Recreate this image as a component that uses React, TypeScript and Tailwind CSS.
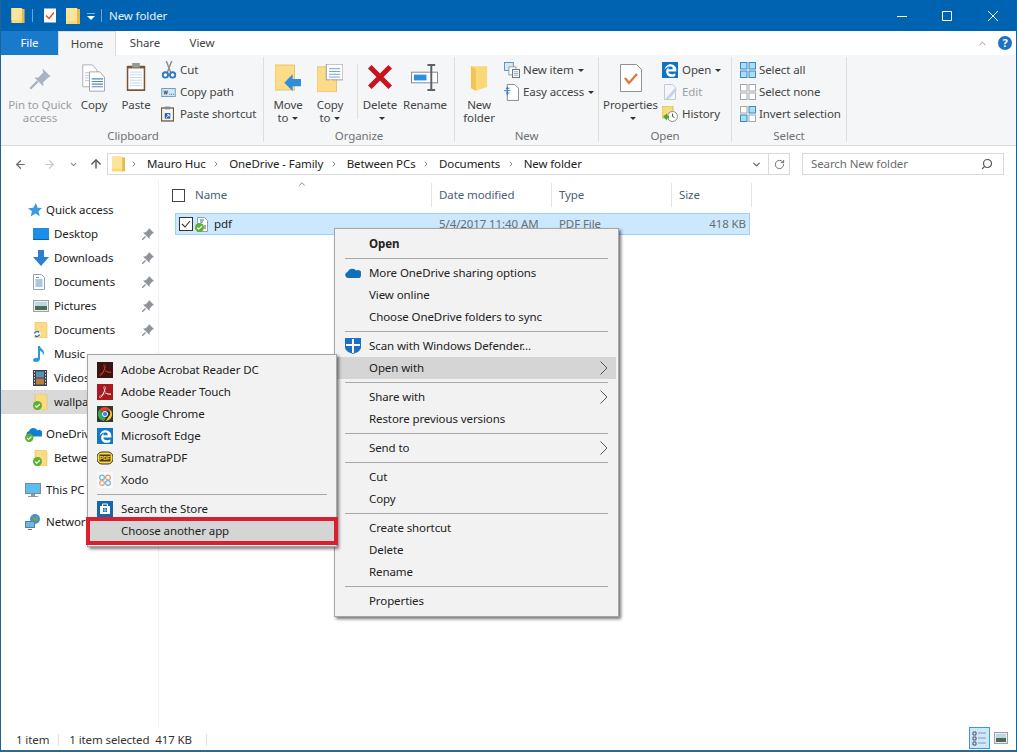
import { ReactNode } from 'react';
import { FaEdgeLegacy } from 'react-icons/fa6';
import { SiAdobeacrobatreader } from 'react-icons/si';
import { ArrowLeft, ArrowRight, ArrowUp, ChevronDown, ChevronRight, ChevronUp, RotateCw, Search } from 'lucide-react';

const Folder = ({ className = '' }: { className?: string }) => (
  <svg viewBox="0 0 14 16" className={className}>
    <path d="M0 0h10l2 1v15H0z" fill="#fbd878" />
    <path d="M11 1h3v15h-3z" fill="#e8b84e" />
    <path d="M0 0h11v13H0z" fill="#fde49c" />
  </svg>
);

const Check = ({ x = 0, y = 0 }: { x?: number; y?: number }) => (
  <g transform={`translate(${x} ${y})`}>
    <circle cx="4.5" cy="4.5" r="4.5" fill="#5cb130" />
    <path d="M2.2 4.6l1.6 1.6 3-3" stroke="#fff" strokeWidth="1.3" fill="none" />
  </g>
);

const SyncFolder = ({ badge }: { badge: 'check' | 'sync' }) => (
  <svg viewBox="0 0 16 16" className="w-4 h-4">
    <path d="M2 0h11l1 2v14H2z" fill="#fbdc84" stroke="#e3bd62" strokeWidth="0.6" />
    {badge === 'check' ? (
      <Check x={0} y={7} />
    ) : (
      <g>
        <circle cx="4" cy="12" r="3.6" fill="#fff" />
        <path d="M1.5 11.5a2.6 2.6 0 0 1 4.6-1M6.5 12.5a2.6 2.6 0 0 1-4.6 1" stroke="#2a62b4" strokeWidth="1.3" fill="none" />
      </g>
    )}
  </svg>
);

const Pin = ({ className = 'w-3 h-3' }: { className?: string }) => (
  <svg viewBox="0 0 12 12" className={className}>
    <path d="M7 0l5 5-1.5.6-2.7 2.7L7.5 11 1 4.5l2.7-.3 2.7-2.7z" fill="#8f949b" />
    <path d="M3.5 8.5L0 12" stroke="#8f949b" strokeWidth="1.4" />
  </svg>
);

const Drop = () => <span className="inline-block align-middle ml-[4px] w-0 h-0 border-x-[3px] border-x-transparent border-t-[3px] border-t-[#333]" />;

// ---- ribbon icons ----
const PinLarge = () => (
  <svg viewBox="0 0 32 32" className="w-[26px] h-[26px]">
    <path d="M19 3l10 10-3 1-6 6 0 5L9 14l5 0 6-6z" fill="#a9b2c2" />
    <path d="M13 19L4 28" stroke="#a9b2c2" strokeWidth="3" />
  </svg>
);
const CopyLarge = () => (
  <svg viewBox="0 0 32 32" preserveAspectRatio="none" className="w-[24px] h-7">
    <path d="M1 1h13l6 6v19H1z" fill="#fff" stroke="#9aa3ad" />
    <path d="M4 10h12M4 13h12M4 16h12M4 19h12" stroke="#a6bedc" />
    <path d="M11 9h14l6 6v16H11z" fill="#fff" stroke="#8c96a1" transform="translate(-1 0)" />
    <path d="M13 17h15M13 20h15M13 23h15M13 26h15" stroke="#4f86c6" strokeWidth="1.2" />
  </svg>
);
const PasteLarge = () => (
  <svg viewBox="0 0 26 32" preserveAspectRatio="none" className="w-[20px] h-[29px]">
    <rect x="1" y="3" width="24" height="28" rx="1" fill="#7a5638" />
    <rect x="3" y="6" width="20" height="23" fill="#fff" />
    <path d="M5 10h16M5 13h16M5 16h16M5 19h16M5 22h16M5 25h16" stroke="#bcd0e6" />
    <rect x="8" y="0" width="10" height="5" fill="#9a9a9a" />
  </svg>
);
const Scissors = () => (
  <svg viewBox="0 0 16 20" className="w-4 h-[18px]">
    <path d="M5 0l5 13M11 0L6 13" stroke="#8a8f96" strokeWidth="1.6" />
    <circle cx="4" cy="15.5" r="3" fill="none" stroke="#2c79be" strokeWidth="2" />
    <circle cx="12" cy="15.5" r="3" fill="none" stroke="#2c79be" strokeWidth="2" />
  </svg>
);
const CopyPath = () => (
  <svg viewBox="0 0 16 10" className="w-[15px] h-[9px]">
    <rect x="0.5" y="0.5" width="15" height="9" fill="#cfe6f7" stroke="#5f9bc8" />
    <path d="M3 3l1 4 1-4 1 4 1-4M9 7h1M11 7h1M13 7h1" stroke="#333" strokeWidth="0.8" fill="none" />
  </svg>
);
const PasteShortcut = () => (
  <svg viewBox="0 0 14 16" className="w-[13px] h-[16px]">
    <rect x="0.5" y="1.5" width="13" height="14" fill="#f5f5f5" stroke="#7a5638" strokeWidth="1.4" />
    <rect x="4" y="0" width="6" height="3" fill="#8a8a8a" />
    <path d="M4 7h6v6H4z" fill="#2464a8" />
    <path d="M5.5 12l3-3M6.5 8.8h2.2V11" stroke="#fff" fill="none" />
  </svg>
);
const MoveTo = () => (
  <svg viewBox="0 0 28 30" className="w-[26px] h-[28px]">
    <path d="M0 1h21v27H0z" fill="#fcdc88" stroke="#e7c067" />
    <path d="M10 20l9-9v5h9v8h-9v5z" fill="#2e8fd8" />
  </svg>
);
const CopyTo = () => (
  <svg viewBox="0 0 28 30" className="w-[26px] h-[28px]">
    <path d="M0 3h21v27H0z" fill="#fcdc88" stroke="#e7c067" />
    <path d="M10 0h18v17H10z" fill="#fff" stroke="#8c96a1" />
    <path d="M13 5h12M13 8h12M13 11h12M13 14h12" stroke="#6f9bcc" />
    <path d="M7 20h7v-4l7 7-7 7v-4H7z" fill="#fcdc88" />
  </svg>
);
const DeleteIcon = () => (
  <svg viewBox="0 0 28 28" className="w-[26px] h-[26px] mb-[2px]">
    <path d="M3 3l22 22M25 3L3 25" stroke="#c8141f" strokeWidth="5.5" />
  </svg>
);
const RenameIcon = () => (
  <svg viewBox="0 0 30 28" className="w-[29px] h-[27px] mb-[1px]">
    <rect x="0.5" y="8.5" width="27" height="11" fill="#fff" stroke="#7d8791" />
    <rect x="3" y="11" width="13" height="6" fill="#2a8fdc" />
    <path d="M17 1h8M17 27h8M21 1v26" stroke="#59626b" strokeWidth="2" />
  </svg>
);
const NewFolderIcon = () => (
  <svg viewBox="0 0 20 28" className="w-[19px] h-[27px]">
    <path d="M1 1h17v22l-12 4-5-3z" fill="#fbd877" />
    <path d="M1 1l5 3v23l-5-3z" fill="#f0c555" />
  </svg>
);
const NewItem = () => (
  <svg viewBox="0 0 18 18" className="w-4 h-4">
    <rect x="0.5" y="0.5" width="10" height="9" fill="#d7e8f4" stroke="#4d8fb8" />
    <rect x="5.5" y="5.5" width="8" height="9" fill="#fff" stroke="#8b95a0" />
    <rect x="9.5" y="8.5" width="8" height="9" fill="#fff" stroke="#5c6771" />
    <path d="M11 11h5M11 13h5M11 15h5" stroke="#7ea6cc" />
  </svg>
);
const EasyAccess = () => (
  <svg viewBox="0 0 16 18" className="w-[15px] h-[17px]">
    <path d="M3.5.5h8l4 4v13h-12z" fill="#fff" stroke="#7d8791" />
    <path d="M0 7h7M2 4.500h4M2 9.500h4M3.500 3v9" stroke="#2a6fb2" strokeWidth="0.9" />
  </svg>
);
const PropertiesIcon = () => (
  <svg viewBox="0 0 22 28" className="w-[22px] h-[28px]">
    <path d="M.5.5h16l5 5v22H.5z" fill="#fff" stroke="#8d9399" />
    <path d="M5 14l4 5 8-9" stroke="#dd7a3c" strokeWidth="2.4" fill="none" />
  </svg>
);
const OpenEdge = () => (
  <span className="w-4 h-4 bg-[#0f74bd] flex items-center justify-center">
    <FaEdgeLegacy className="w-[13px] h-[13px] text-white" />
  </span>
);
const EditIcon = () => (
  <svg viewBox="0 0 16 16" className="w-4 h-4">
    <path d="M2.500.5h8l3 3v12h-11z" fill="#f4f6f8" stroke="#c2c9d0" />
    <path d="M5 13l8-9 2 2-8 9H4z" fill="#c8d4e6" />
  </svg>
);
const HistoryIcon = () => (
  <svg viewBox="0 0 16 16" className="w-4 h-4">
    <path d="M0 0h11v12H0z" fill="#f5dc7c" stroke="#dcbc55" />
    <circle cx="10.500" cy="10.500" r="5" fill="#fff" stroke="#8b8b8b" />
    <path d="M10.500 7.500v3l2 1" stroke="#555" fill="none" />
    <path d="M1 10.500l4-3v2h2v3H5v2z" fill="#52a72c" />
  </svg>
);
const SelectGrid = ({ fill }: { fill: [string, string, string, string] }) => (
  <svg viewBox="0 0 16 16" className="w-4 h-4">
    {[0, 8.5, 0, 8.5].map((x, i) => {
      const y = i < 2 ? 0 : 8.5;
      return <rect key={i} x={x + 0.5} y={y + 0.5} width="6.5" height="6.500" fill={fill[i]} stroke={fill[i] === '#fff' ? '#a3a8ad' : '#3a8cc0'} />;
    })}
  </svg>
);

// ---- ribbon parts ----
function LargeButton({ w, icon, lines, disabled }: { w: number; icon: ReactNode; lines: ReactNode[]; disabled?: boolean }) {
  return (
    <div style={{ width: w }} className={`flex flex-col items-center text-center leading-[13px] shrink-0 ${disabled ? 'text-[#9b9fa3]' : 'text-[#444]'}`}>
      <div className="h-[31px] mt-[4px] mb-[6px] flex items-end justify-center">{icon}</div>
      {lines.map((l, i) => (
        <div key={i} className="whitespace-nowrap h-[13px]">{l}</div>
      ))}
    </div>
  );
}

function SmallRow({ icon, label, disabled, iconW = 18 }: { icon: ReactNode; label: ReactNode; disabled?: boolean; iconW?: number }) {
  return (
    <div className={`h-[22px] flex items-center whitespace-nowrap ${disabled ? 'text-[#9b9fa3]' : 'text-[#444]'}`}>
      <span style={{ width: iconW }} className="flex items-center justify-start shrink-0">{icon}</span>
      {label}
    </div>
  );
}

function Group({ width, title, children }: { width: number; title: string; children: ReactNode }) {
  return (
    <div style={{ width }} className="h-[85px] mt-[2px] flex flex-col border-r border-[#dcdee0] shrink-0">
      <div className="h-[70px] flex">{children}</div>
      <div className="text-center text-[#6f7276] leading-[13px] mt-[4px]">{title}</div>
    </div>
  );
}

function Ribbon() {
  return (
    <div className="h-[92px] bg-[#f5f6f7] border-y border-[#dadbdc] flex pl-[2px] shrink-0">
      <Group width={261} title="Clipboard">
        <LargeButton w={74} disabled icon={<PinLarge />} lines={['Pin to Quick', 'access']} />
        <LargeButton w={34} icon={<CopyLarge />} lines={['Copy']} />
        <LargeButton w={50} icon={<PasteLarge />} lines={['Paste']} />
        <div className="pt-[2px]">
          <SmallRow icon={<Scissors />} label="Cut" iconW={19} />
          <SmallRow icon={<CopyPath />} label="Copy path" iconW={19} />
          <SmallRow icon={<PasteShortcut />} label="Paste shortcut" iconW={19} />
        </div>
      </Group>
      <Group width={191} title="Organize">
        <LargeButton w={48} icon={<MoveTo />} lines={['Move', <>to<Drop /></>]} />
        <LargeButton w={36} icon={<CopyTo />} lines={['Copy', <>to<Drop /></>]} />
        <div className="w-px h-[55px] mt-[7px] bg-[#dcdee0] ml-[9px]" />
        <LargeButton w={44} icon={<DeleteIcon />} lines={['Delete', <Drop />]} />
        <LargeButton w={46} icon={<RenameIcon />} lines={['Rename']} />
      </Group>
      <Group width={144} title="New">
        <LargeButton w={48} icon={<NewFolderIcon />} lines={['New', 'folder']} />
        <div className="pt-[2px] pl-[1px]">
          <SmallRow icon={<NewItem />} label={<>New item<Drop /></>} iconW={19} />
          <SmallRow icon={<EasyAccess />} label={<>Easy access<Drop /></>} iconW={19} />
        </div>
      </Group>
      <Group width={133} title="Open">
        <LargeButton w={63} icon={<PropertiesIcon />} lines={['Properties', <Drop />]} />
        <div className="pt-[2px]">
          <SmallRow icon={<OpenEdge />} label={<>Open<Drop /></>} iconW={20} />
          <SmallRow icon={<EditIcon />} label="Edit" disabled iconW={20} />
          <SmallRow icon={<HistoryIcon />} label="History" iconW={20} />
        </div>
      </Group>
      <Group width={115} title="Select">
        <div className="pt-[2px] pl-[8px]">
          <SmallRow icon={<SelectGrid fill={['#a9dcf8', '#a9dcf8', '#a9dcf8', '#a9dcf8']} />} label="Select all" iconW={19} />
          <SmallRow icon={<SelectGrid fill={['#fff', '#fff', '#fff', '#fff']} />} label="Select none" iconW={19} />
          <SmallRow icon={<SelectGrid fill={['#fff', '#a9dcf8', '#a9dcf8', '#fff']} />} label="Invert selection" iconW={19} />
        </div>
      </Group>
    </div>
  );
}

function TitleBar() {
  return (
    <div className="h-[31px] bg-[#0063b1] flex items-center text-white shrink-0">
      <Folder className="w-[14px] h-[15px] ml-[10px]" />
      <div className="w-px h-[13px] bg-[#6fa3d2] ml-[7px]" />
      <svg viewBox="0 0 12 14" className="w-3 h-[15px] ml-[11px]">
        <path d="M0 0h12v14H0z" fill="#fff" />
        <path d="M2 7l3 3 5-6" stroke="#d9482c" strokeWidth="1.4" fill="none" />
      </svg>
      <Folder className="w-[14px] h-[16px] ml-[10px]" />
      <svg viewBox="0 0 8 8" className="w-2 h-2 ml-[7px] mt-[2px]">
        <path d="M0 0h8" stroke="#fff" />
        <path d="M0 3h8L4 7z" fill="#fff" />
      </svg>
      <div className="w-px h-[13px] bg-[#6fa3d2] ml-[6px]" />
      <span className="ml-[7px] text-[#e6f1fa]">New folder</span>
      <div className="ml-auto flex items-center">
        <svg viewBox="0 0 10 1" className="w-[10px] h-px mr-[35px] mt-[1px]"><path d="M0 .5h10" stroke="#fff" /></svg>
        <svg viewBox="0 0 10 10" className="w-[10px] h-[10px] mr-[36px]"><path d="M.5.5h9v9h-9z" stroke="#fff" fill="none" /></svg>
        <svg viewBox="0 0 10 10" className="w-[10px] h-[10px] mr-[18px]"><path d="M0 0l10 10M10 0L0 10" stroke="#fff" /></svg>
      </div>
    </div>
  );
}

function Tabs() {
  return (
    <div className="h-[24px] bg-white flex items-stretch relative shrink-0 z-10 -mb-px">
      <div className="w-[57px] bg-[#1979ca] text-white flex items-center justify-center">File</div>
      <div className="w-[58px] border-x border-t border-[#dadbdc] border-b-0 h-[25px] bg-[#f5f6f7] flex items-center justify-center text-[#444]">Home</div>
      <div className="w-[58px] flex items-center justify-center text-[#444]">Share</div>
      <div className="w-[56px] flex items-center justify-center text-[#444]">View</div>
      <div className="ml-auto flex items-center pr-[4px]">
        <ChevronUp className="w-[11px] h-[11px] text-[#8c8c8c] mr-[10px]" />
        <span className="w-[14px] h-[14px] rounded-full bg-[#1c73c4] text-white text-[11px] font-bold flex items-center justify-center">?</span>
      </div>
    </div>
  );
}

function AddressBar() {
  const crumbs = ['Mauro Huc', 'OneDrive - Family', 'Between PCs', 'Documents', 'New folder'];
  return (
    <div className="h-[34px] flex items-center bg-white shrink-0 pt-[2px]">
      <ArrowLeft className="w-[13px] h-[13px] text-[#6d6d6d] ml-[13px]" strokeWidth={2.2} />
      <ArrowRight className="w-[13px] h-[13px] text-[#c9c9c9] ml-[16px]" strokeWidth={2.2} />
      <ChevronDown className="w-[9px] h-[9px] text-[#8a8a8a] ml-[13px]" strokeWidth={3} />
      <ArrowUp className="w-[14px] h-[14px] text-[#555] ml-[11px]" strokeWidth={2.4} />
      <div className="ml-[4px] w-[683px] h-[22px] border border-[#d9d9d9] flex items-center text-[#222]">
        <Folder className="w-[13px] h-[16px] ml-[4px]" />
        {crumbs.map(c => (
          <span key={c} className="flex items-center">
            <ChevronRight className="w-[8px] h-[8px] text-[#888] ml-[5px] mr-[9px]" strokeWidth={3} />
            {c}
            <span className="w-[1.5px]" />
          </span>
        ))}
        <ChevronDown className="w-[11px] h-[11px] text-[#6d6d6d] ml-auto mr-[6px]" strokeWidth={3} />
        <div className="w-[21px] h-full border-l border-[#d9d9d9] flex items-center justify-center">
          <RotateCw className="w-[11px] h-[11px] text-[#666]" strokeWidth={2} />
        </div>
      </div>
      <div className="ml-[12px] w-[202px] h-[22px] border border-[#d9d9d9] flex items-center pl-[8px] pr-[10px] text-[#6d6d6d]">
        Search New folder
        <Search className="w-[12px] h-[12px] ml-auto text-[#555] -scale-x-100" strokeWidth={2.4} />
      </div>
    </div>
  );
}

// ---- nav pane ----
const DesktopIcon = () => (
  <svg viewBox="0 0 16 14" className="w-4 h-[14px]"><rect y="1" width="16" height="11" fill="#1d8ee6" /><path d="M0 12h16v1H0z" fill="#0c5fa8" /></svg>
);
const DownloadIcon = () => (
  <svg viewBox="0 0 16 16" className="w-4 h-4"><path d="M5 0h6v7h5l-8 9-8-9h5z" fill="#2f7fd0" /></svg>
);
const DocIcon = () => (
  <svg viewBox="0 0 12 16" className="w-3 h-4"><path d="M.5.5h8l3 3v12H.5z" fill="#fff" stroke="#98a2ab" /><path d="M2.500 6h7M2.500 8h7M2.500 10h7M2.500 12h7M3 3.500h3" stroke="#5a8fc4" /></svg>
);
const PicturesIcon = () => (
  <svg viewBox="0 0 16 12" className="w-4 h-3"><rect x=".5" y=".5" width="15" height="11" fill="#e8eef3" stroke="#98a2ab" /><path d="M2 2h12v4H2z" fill="#bcd6ea" /><path d="M2 6h12v4H2z" fill="#4e6a4e" /></svg>
);
const MusicIcon = () => (
  <svg viewBox="0 0 12 16" className="w-3 h-4"><path d="M5 0h2c0 3 4 3 4 7 0 1-1 2-1 2 0-3-2-4-3-4v8c0 2-2 3-4 3-2 0-3-1-3-2s2-3 5-2z" fill="#2a9bd9" /></svg>
);
const VideosIcon = () => (
  <svg viewBox="0 0 14 16" className="w-[14px] h-4"><rect width="14" height="16" fill="#39404a" /><rect x="3" y="1.500" width="8" height="6" fill="#5a8fb8" /><rect x="3" y="8.500" width="8" height="6" fill="#b77f3e" /><path d="M1.500 1v14M12.500 1v14" stroke="#ddd" strokeDasharray="1.500 1.500" /></svg>
);
const Star = () => (
  <svg viewBox="0 0 16 16" className="w-[14px] h-[14px]"><path d="M9 0l2 5.500 5 .3-4 3.700 1.400 5.500L8.500 12 3 15.500l1.500-6L0 6l6-.5z" fill="#3a9ae0" /></svg>
);
const OneDriveIcon = () => (
  <svg viewBox="0 0 18 16" className="w-[17px] h-[15px]">
    <path d="M3 10a3 3 0 0 1 1-5.500 5 5 0 0 1 9-1A3.500 3.500 0 0 1 18 8v2z" fill="#0f7fcf" />
    <Check x={0} y={7} />
  </svg>
);
const PcIcon = () => (
  <svg viewBox="0 0 16 14" className="w-4 h-[14px]"><rect x=".5" y=".5" width="15" height="10" fill="#5ebdf0" stroke="#7d8a94" /><path d="M6 11h4v2H6zM3 13h10v1H3z" fill="#8e9aa3" /></svg>
);
const NetworkIcon = () => (
  <svg viewBox="0 0 16 16" className="w-4 h-4"><circle cx="10" cy="5" r="5" fill="#4a90d0" /><path d="M7 2l3 2 2-2 1 4-4 1z" fill="#6db04a" /><rect x=".5" y="7.500" width="9" height="6" fill="#69b8e8" stroke="#5d7d92" /><path d="M3 15.500h4" stroke="#5d7d92" /></svg>
);

function NavRow({ icon, label, pin, indent = 32, iconW = 21, selected, mt = 0 }: { icon: ReactNode; label: string; pin?: boolean; indent?: number; iconW?: number; selected?: boolean; mt?: number }) {
  return (
    <div style={{ paddingLeft: indent, marginTop: mt }} className={`h-[24px] flex items-center text-[#222] whitespace-nowrap ${selected ? 'bg-[#d9d9d9]' : ''}`}>
      <span style={{ width: iconW }} className="flex justify-start shrink-0">{icon}</span>
      {label}
      {pin && <span className="ml-auto mr-[4px]"><Pin /></span>}
    </div>
  );
}

function NavPane() {
  return (
    <div className="w-[158px] border-r border-[#f0f0f0] pt-[18px] shrink-0">
      <NavRow icon={<Star />} label="Quick access" indent={27} iconW={18} />
      <NavRow icon={<DesktopIcon />} label="Desktop" pin />
      <NavRow icon={<DownloadIcon />} label="Downloads" pin />
      <NavRow icon={<DocIcon />} label="Documents" pin />
      <NavRow icon={<PicturesIcon />} label="Pictures" pin />
      <NavRow icon={<SyncFolder badge="sync" />} label="Documents" pin />
      <NavRow icon={<MusicIcon />} label="Music" />
      <NavRow icon={<VideosIcon />} label="Videos" />
      <NavRow icon={<SyncFolder badge="check" />} label="wallpapers" selected />
      <NavRow icon={<OneDriveIcon />} label="OneDrive - Family" indent={24} mt={8} />
      <NavRow icon={<SyncFolder badge="check" />} label="Between PCs" />
      <NavRow icon={<PcIcon />} label="This PC" indent={24} mt={8} />
      <NavRow icon={<NetworkIcon />} label="Network" indent={24} mt={8} />
    </div>
  );
}

// ---- file list ----
function FileList() {
  const th = 'h-[24px] flex items-center border-r border-[#e5e5e5] pl-[7px] text-[#4c607a] shrink-0';
  return (
    <div className="flex-1 relative text-[#222]">
      <div className="flex h-[24px] mt-[3px] ml-[13px]">
        <div className={`${th} w-[260px] !pl-0`}>
          <span className="w-[13px] h-[13px] border border-[#444] bg-white mr-[10px] shrink-0" />
          Name
        </div>
        <div className={`${th} w-[120px]`}>Date modified</div>
        <div className={`${th} w-[120px]`}>Type</div>
        <div className={`${th} w-[80px]`}>Size</div>
      </div>
      <ChevronUp className="absolute left-[138px] top-[-1px] w-[10px] h-[10px] text-[#777]" strokeWidth={2} />
      <div className="ml-[16px] mt-[6px] w-[575px] h-[22px] bg-[#cce8ff] border border-[#99d1ff] flex items-center">
        <span className="w-[14px] h-[14px] ml-[3px] border border-[#333] bg-white flex items-center justify-center shrink-0">
          <svg viewBox="0 0 10 10" className="w-[10px] h-[10px]"><path d="M1 5l3 3 5-6" stroke="#333" strokeWidth="1.100" fill="none" /></svg>
        </span>
        <svg viewBox="0 0 13 15" className="w-[13px] h-[15px] ml-[2px] shrink-0">
          <path d="M2.500.5h7l3 3v11h-10z" fill="#fff" stroke="#8fa0ae" />
          <path d="M5 3h4M5 5h3" stroke="#2a6fb2" />
          <path d="M9 9h2M9 11h2" stroke="#555" />
          <Check x={0} y={6} />
        </svg>
        <span className="ml-[6px] w-[225px]">pdf</span>
        <span className="w-[120px] text-[#6d6d6d]">5/4/2017 11:40 AM</span>
        <span className="w-[100px] text-[#6d6d6d]">PDF File</span>
        <span className="flex-1 text-right pr-[3px] text-[#6d6d6d]">418 KB</span>
      </div>
    </div>
  );
}

function StatusBar() {
  return (
    <div className="h-[24px] flex items-center text-[#333] shrink-0">
      <span className="ml-[15px] mt-[3px]">1 item</span>
      <span className="w-px h-[12px] mt-[3px] bg-[#e2e2e2] ml-[9px]" />
      <span className="ml-[10px] mt-[3px]">1 item selected&nbsp;&nbsp;417 KB</span>
      <span className="w-px h-[12px] mt-[3px] bg-[#e2e2e2] ml-[14px]" />
      <div className="ml-auto mr-[8px] flex items-center">
        <span className="w-[21px] h-[22px] bg-[#cce8ff] border border-[#3e9ad0] flex items-center justify-center">
          <svg viewBox="0 0 15 15" className="w-[15px] h-[15px]">
            <path d="M1 1h3v3H1zM1 6h3v3H1zM1 11h3v3H1z" fill="none" stroke="#555" />
            <path d="M6 2h8M6 7h8M6 12h8" stroke="#8a98a3" strokeWidth="1.200" />
          </svg>
        </span>
        <svg viewBox="0 0 14 12" className="w-[14px] h-3 ml-[4px]">
          <rect x=".5" y=".5" width="13" height="11" fill="#e8eef3" stroke="#98a2ab" />
          <path d="M2 2h10v4H2z" fill="#bcd6ea" />
          <path d="M2 6h10v4H2z" fill="#4e6a4e" />
        </svg>
      </div>
    </div>
  );
}

// ---- context menus ----
const DefenderIcon = () => (
  <svg viewBox="0 0 16 16" className="w-4 h-4"><path d="M0 0h16v9c0 4-5 6-8 7-3-1-8-3-8-7z" fill="#1a70c2" /><path d="M7 1h2v5h6v2H9v7H7V8H1V6h6z" fill="#fff" /></svg>
);
const CloudIcon = () => (
  <svg viewBox="0 0 16 10" className="w-4 h-[10px]"><path d="M3 10a3 3 0 0 1-.5-5.900 5 5 0 0 1 8.500-1.600A3.500 3.500 0 0 1 16 7c0 1-.5 3-2 3z" fill="#0f6fb8" /></svg>
);
const MenuArrow = () => (
  <svg viewBox="0 0 8 14" className="w-[8px] h-[14px] ml-auto mr-[8px] shrink-0"><path d="M.5.5L7 7 .5 13.500" stroke="#555" fill="none" /></svg>
);

type MainItem = { label?: string; bold?: boolean; icon?: ReactNode; arrow?: boolean; active?: boolean; sep?: boolean };
const mainMenu: MainItem[] = [
  { label: 'Open', bold: true },
  { sep: true },
  { label: 'More OneDrive sharing options', icon: <CloudIcon /> },
  { label: 'View online' },
  { label: 'Choose OneDrive folders to sync' },
  { sep: true },
  { label: 'Scan with Windows Defender...', icon: <DefenderIcon /> },
  { label: 'Open with', arrow: true, active: true },
  { sep: true },
  { label: 'Share with', arrow: true },
  { label: 'Restore previous versions' },
  { sep: true },
  { label: 'Send to', arrow: true },
  { sep: true },
  { label: 'Cut' },
  { label: 'Copy' },
  { sep: true },
  { label: 'Create shortcut' },
  { label: 'Delete' },
  { label: 'Rename' },
  { sep: true },
  { label: 'Properties' },
];

function ContextMenu() {
  return (
    <div className="absolute left-[333px] top-[228px] w-[285px] h-[389px] bg-[#f2f2f2] border border-[#a6a6a6] shadow-[2px_2px_3px_rgba(0,0,0,0.55)] pt-[4px] px-[2px] text-[#222] z-20">
      {mainMenu.map((item, i) =>
        item.sep ? (
          <div key={i} className="h-[7px] flex items-center pl-[8px] pr-[8px]">
            <div className="w-full h-px bg-[#a8a8a8]" />
          </div>
        ) : (
          <div key={i} className={`h-[22px] flex items-center ${item.active ? 'bg-[#d5d5d5]' : ''} ${item.bold ? 'font-bold' : ''}`}>
            <span className="w-[32px] pl-[8px] shrink-0 flex items-center">{item.icon}</span>
            {item.label}
            {item.arrow && <MenuArrow />}
          </div>
        )
      )}
    </div>
  );
}

const tile = 'w-4 h-4 flex items-center justify-center shrink-0';
const AcrobatDC = () => (
  <span className={`${tile} bg-[#3a1410]`}><SiAdobeacrobatreader className="w-3 h-3 text-[#e8392c]" /></span>
);
const ReaderTouch = () => (
  <span className={`${tile} bg-[#a81a1f]`}><SiAdobeacrobatreader className="w-3 h-3 text-white" /></span>
);
const ChromeIcon = () => (
  <span className={`${tile} bg-[#2f3a30]`}>
    <svg viewBox="0 0 16 16" className="w-[14px] h-[14px]">
      <path d="M8 0a8 8 0 0 1 7 4H8a4 4 0 0 0-3.700 2.500L2 2.500A8 8 0 0 1 8 0z" fill="#e34133" />
      <path d="M15 4a8 8 0 0 1-6 12l3-5a4 4 0 0 0 0-7z" fill="#f7c52b" />
      <path d="M2 2.500l3.500 6A4 4 0 0 0 9 12l-2 4A8 8 0 0 1 2 2.500z" fill="#3aa655" />
      <circle cx="8" cy="8" r="3" fill="#3f85ed" stroke="#fff" />
    </svg>
  </span>
);
const EdgeTile = () => (
  <span className={`${tile} bg-[#1178c4]`}><FaEdgeLegacy className="w-[13px] h-[13px] text-white" /></span>
);
const Sumatra = () => (
  <svg viewBox="0 0 16 16" className="w-4 h-4 shrink-0">
    <rect y="2" width="16" height="12" rx="5" fill="#ffd83c" stroke="#333" />
    <rect x="2.500" y="4.500" width="11" height="7" fill="#4a3a12" />
    <text x="8" y="10.200" textAnchor="middle" fontSize="5.500" fontWeight="700" fill="#ffd83c" fontFamily="'Liberation Sans', sans-serif">PDF</text>
  </svg>
);
const XodoIcon = () => (
  <svg viewBox="0 0 16 16" className="w-4 h-4 shrink-0">
    <rect width="16" height="16" fill="#fafafa" />
    <circle cx="5" cy="5.500" r="2.400" stroke="#6fb6d8" strokeWidth="1.200" fill="none" />
    <circle cx="11" cy="5.500" r="2.400" stroke="#e3a27a" strokeWidth="1.200" fill="none" />
    <circle cx="5" cy="11" r="2.400" stroke="#e3a27a" strokeWidth="1.200" fill="none" />
    <circle cx="11" cy="11" r="2.400" stroke="#6fb6d8" strokeWidth="1.200" fill="none" />
  </svg>
);
const StoreIcon = () => (
  <svg viewBox="0 0 16 16" className="w-4 h-4 shrink-0">
    <rect width="16" height="16" fill="#1168ae" />
    <path d="M3 5h10v8H3z" fill="#fff" />
    <path d="M5.500 5V3h5v2" stroke="#fff" fill="none" />
    <path d="M6 7h1.700v1.700H6zM8.300 7H10v1.700H8.300zM6 9.300h1.700V11H6zM8.300 9.300H10V11H8.300z" fill="#1168ae" />
  </svg>
);

function OpenWithMenu() {
  const apps: [ReactNode, string][] = [
    [<AcrobatDC />, 'Adobe Acrobat Reader DC'],
    [<ReaderTouch />, 'Adobe Reader Touch'],
    [<ChromeIcon />, 'Google Chrome'],
    [<EdgeTile />, 'Microsoft Edge'],
    [<Sumatra />, 'SumatraPDF'],
    [<XodoIcon />, 'Xodo'],
  ];
  return (
    <div className="absolute left-[86px] top-[354px] w-[250px] h-[193px] bg-[#f2f2f2] border border-[#a6a6a6] shadow-[2px_2px_3px_rgba(0,0,0,0.5)] pt-[4px] text-[#222] z-30">
      {apps.map(([icon, label]) => (
        <div key={label} className="h-[22px] flex items-center pl-[9px]">
          <span className="w-[24px] flex shrink-0">{icon}</span>
          {label}
        </div>
      ))}
      <div className="h-[7px] flex items-center pl-[9px] pr-[9px]">
        <div className="w-full h-px bg-[#a8a8a8]" />
      </div>
      <div className="h-[22px] flex items-center pl-[9px]">
        <span className="w-[24px] flex shrink-0"><StoreIcon /></span>
        Search the Store
      </div>
      <div className="absolute left-[-2px] top-[162px] w-[252px] h-[28px] border-[4px] border-[#d9202f] bg-[#d5d5d5] flex items-center pl-[31px]">
        Choose another app
      </div>
    </div>
  );
}

export default function App() {
  return (
    <div className="relative w-[1017px] h-[752px] overflow-hidden bg-white flex flex-col border-x border-b-2 border-x-[#1f6491] border-b-[#2a6a8e] text-[11.5px] tracking-[-0.1px] font-['Noto_Sans','Open_Sans',sans-serif]">
      <TitleBar />
      <Tabs />
      <Ribbon />
      <AddressBar />
      <div className="flex flex-1 min-h-0">
        <NavPane />
        <FileList />
      </div>
      <StatusBar />
      <ContextMenu />
      <OpenWithMenu />
    </div>
  );
}
